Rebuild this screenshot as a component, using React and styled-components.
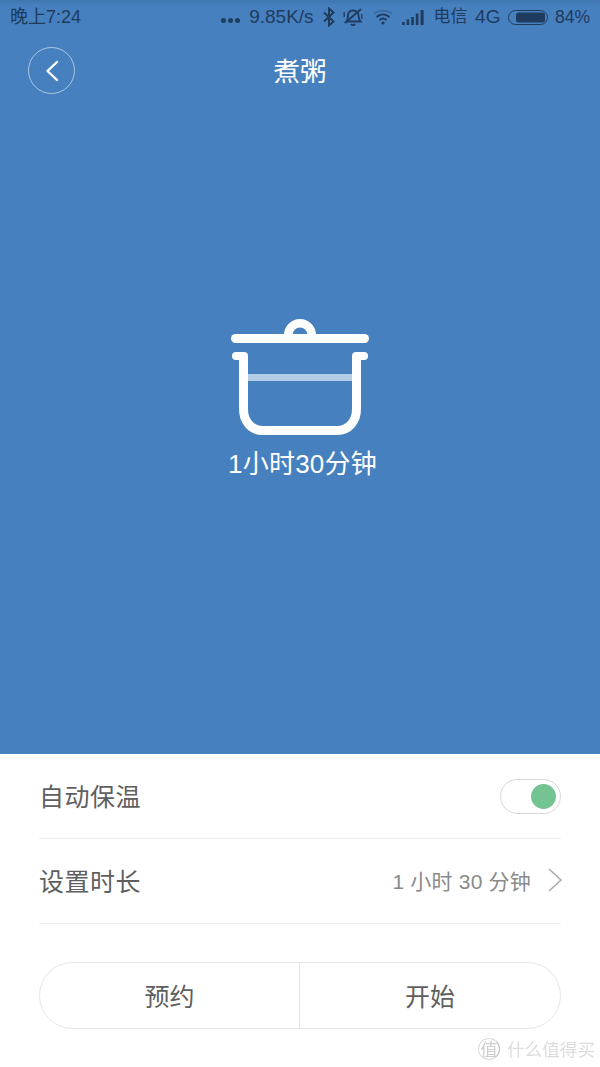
import React from "react";
import styled, { createGlobalStyle } from "styled-components";

const GlobalStyle = createGlobalStyle`
  html, body {
    margin: 0;
    padding: 0;
    background: #fff;
  }
  * {
    box-sizing: border-box;
  }
`;

const Page = styled.div`
  position: relative;
  width: 600px;
  height: 1067px;
  overflow: hidden;
  display: flex;
  flex-direction: column;
  font-family: "Liberation Sans", "Noto Sans CJK SC", sans-serif;
  background: #fff;
`;

const Hero = styled.div`
  height: 754px;
  background: linear-gradient(#3f76b2 0, #4680bf 6px);
  display: flex;
  flex-direction: column;
`;

const StatusBar = styled.div`
  height: 34px;
  padding: 0 10px;
  display: flex;
  align-items: center;
  justify-content: space-between;
  color: #1f3b5e;
  font-size: 18px;
  line-height: 20px;
`;

const StatusGroup = styled.div`
  display: flex;
  align-items: center;
  gap: 9.5px;
`;

const Dots = styled.div`
  display: flex;
  gap: 2px;
  margin-top: 6px;
`;

const Dot = styled.span`
  width: 5px;
  height: 5px;
  border-radius: 50%;
  background: #1f3b5e;
`;

const Speed = styled.span`
  font-size: 19px;
`;

const BluetoothSvg = styled.svg`
  margin-right: -1.5px;
`;

const Carrier = styled.span`
  margin-right: -2px;
  font-size: 17px;
`;

const Network = styled.span`
  margin-right: -1.5px;
  font-size: 19px;
`;

const Percent = styled.span`
  margin-left: -3px;
  font-size: 17.5px;
`;

const Header = styled.div`
  margin-top: 13px;
  padding: 0 28px;
  display: grid;
  grid-template-columns: 1fr auto 1fr;
  align-items: start;
`;

const BackButton = styled.button`
  width: 47px;
  height: 47px;
  padding: 0;
  border: 1px solid rgba(255, 255, 255, 0.55);
  border-radius: 50%;
  background: transparent;
  display: flex;
  align-items: center;
  justify-content: center;
`;

const Title = styled.div`
  margin-top: 2px;
  color: #fff;
  font-size: 26.5px;
  line-height: 47px;
`;

const Center = styled.div`
  margin-top: 221px;
  display: flex;
  flex-direction: column;
  align-items: center;
`;

const Duration = styled.div`
  margin-top: 8px;
  padding-left: 5px;
  color: #fff;
  font-size: 26px;
  line-height: 38px;
  letter-spacing: 0.2px;
`;

const Panel = styled.div`
  flex: 1;
  padding: 0 39px;
  display: flex;
  flex-direction: column;
`;

const Row = styled.div`
  height: 85px;
  padding-bottom: 2px;
  border-bottom: 1px solid #eeeeee;
  display: flex;
  align-items: center;
  justify-content: space-between;
`;

const RowLabel = styled.span`
  color: #5f5f5f;
  font-size: 25px;
  letter-spacing: 0.5px;
`;

const RowValue = styled.div`
  display: flex;
  align-items: center;
  gap: 16px;
  margin-right: -2px;
  color: #8a8a8a;
  font-size: 21px;
  letter-spacing: 0.2px;
`;

const Toggle = styled.div`
  width: 61px;
  height: 35px;
  margin-top: 2px;
  padding: 4px 4px 4px 0;
  border: 1px solid #d8d8d8;
  border-radius: 18px;
  display: flex;
  justify-content: flex-end;
  align-items: center;
`;

const Knob = styled.span`
  width: 25px;
  height: 25px;
  border-radius: 50%;
  background: #74c493;
`;

const Actions = styled.div`
  margin-top: 38px;
  height: 67px;
  border: 1px solid #e6e6e6;
  border-radius: 34px;
  display: flex;
`;

const Action = styled.div`
  flex: 1;
  padding-bottom: 2px;
  display: flex;
  align-items: center;
  justify-content: center;
  color: #5f5f5f;
  font-size: 25px;
  &:first-child {
    flex: 0 0 259px;
  }
  & + & {
    border-left: 1px solid #e6e6e6;
  }
`;

const Watermark = styled.div`
  position: absolute;
  right: 5px;
  bottom: 6px;
  display: flex;
  align-items: center;
  gap: 7px;
  color: #dcdcdc;
  font-size: 17.6px;
  filter: blur(0.4px);
`;

const Badge = styled.span`
  width: 22px;
  height: 22px;
  border: 1px solid #dcdcdc;
  border-right-color: #bbb;
  border-radius: 50%;
  display: flex;
  align-items: center;
  justify-content: center;
  font-size: 17px;
  color: #cdcdcd;
`;

const BluetoothIcon = () => (
  <BluetoothSvg width="12" height="20" viewBox="0 0 12 20" fill="none" stroke="#1f3b5e" strokeWidth="2">
    <path d="M1 5.5 L10.5 14.5 L6 18.5 V1.5 L10.5 5.5 L1 14.5" />
  </BluetoothSvg>
);

const MuteBellIcon = () => (
  <svg width="20" height="20" viewBox="0 0 20 20" fill="none" stroke="#1f3b5e" strokeWidth="1.8">
    <path d="M3.5 14.5 C5.5 12.5 4.5 9.5 5 7.5 C5.7 5 8 3.5 10 3.5 C12.5 3.5 14.8 5.2 15.4 7.5 C16 10 15.5 12.5 17.5 14.5 Z" />
    <path d="M8 17 C9 18.5 11 18.5 12 17" />
    <path d="M2 16 L18 2" strokeWidth="2" />
    <path d="M1.2 10 L1.2 5 M18.8 12 L18.8 7" strokeWidth="1.3" />
  </svg>
);

const WifiIcon = () => (
  <svg width="20" height="16" viewBox="0 0 20 16" fill="none" stroke="#1f3b5e">
    <path d="M1 5 C6 0.5 14 0.5 19 5" strokeWidth="1.6" opacity="0.3" />
    <path d="M3.5 8 C7.5 4.5 12.5 4.5 16.5 8" strokeWidth="2" />
    <path d="M6.5 11 C8.5 9.3 11.5 9.3 13.5 11" strokeWidth="2" />
    <circle cx="10" cy="14" r="1.6" fill="#1f3b5e" stroke="none" />
  </svg>
);

const SignalIcon = () => (
  <svg width="22" height="15" viewBox="0 0 22 15" fill="#1f3b5e">
    <rect x="0" y="12" width="2.6" height="3" />
    <rect x="4.6" y="9.5" width="2.6" height="5.5" />
    <rect x="9.2" y="7" width="2.6" height="8" />
    <rect x="13.8" y="3.5" width="2.6" height="11.5" />
    <rect x="18.6" y="0" width="3" height="15" />
  </svg>
);

const BatteryIcon = () => (
  <svg width="40" height="15" viewBox="0 0 40 15">
    <rect x="0.5" y="0.5" width="39" height="14" rx="7" fill="none" stroke="#1f3b5e" />
    <rect x="8" y="2.5" width="29" height="10" rx="2.5" fill="#1f3b5e" />
  </svg>
);

const BackIcon = () => (
  <svg width="16" height="24" viewBox="0 0 16 24" fill="none" stroke="#fff" strokeWidth="2.4" strokeLinecap="round" strokeLinejoin="round">
    <path d="M13 3 L3.5 12 L13 21" />
  </svg>
);

const PotIcon = () => (
  <svg width="140" height="120" viewBox="0 0 140 120">
    <path d="M54 18 A16 16 0 0 1 86 18 H77.5 A7.5 7.5 0 0 0 62.5 18 Z" fill="#fff" />
    <rect x="1" y="17" width="138" height="9" rx="4.5" fill="#fff" />
    <rect x="17" y="57" width="106" height="7" fill="#b3cde6" />
    <path
      d="M13.5 39 V92 C13.5 104 21 113.5 33 113.5 H107 C119 113.5 126.5 104 126.5 92 V39"
      fill="none"
      stroke="#fff"
      strokeWidth="9"
    />
    <rect x="2" y="35" width="16" height="8" rx="4" fill="#fff" />
    <rect x="122" y="35" width="16" height="8" rx="4" fill="#fff" />
  </svg>
);

const ChevronIcon = () => (
  <svg width="16" height="26" viewBox="0 0 16 26" fill="none" stroke="#a8a8a8" strokeWidth="1.5">
    <path d="M2 2 L14 13 L2 24" />
  </svg>
);

export default function App() {
  return (
    <Page>
      <GlobalStyle />
      <Hero>
        <StatusBar>
          <span>晚上7:24</span>
          <StatusGroup>
            <Dots>
              <Dot />
              <Dot />
              <Dot />
            </Dots>
            <Speed>9.85K/s</Speed>
            <BluetoothIcon />
            <MuteBellIcon />
            <WifiIcon />
            <SignalIcon />
            <Carrier>电信</Carrier>
            <Network>4G</Network>
            <BatteryIcon />
            <Percent>84%</Percent>
          </StatusGroup>
        </StatusBar>
        <Header>
          <BackButton aria-label="返回">
            <BackIcon />
          </BackButton>
          <Title>煮粥</Title>
        </Header>
        <Center>
          <PotIcon />
          <Duration>1小时30分钟</Duration>
        </Center>
      </Hero>
      <Panel>
        <Row>
          <RowLabel>自动保温</RowLabel>
          <Toggle>
            <Knob />
          </Toggle>
        </Row>
        <Row>
          <RowLabel>设置时长</RowLabel>
          <RowValue>
            1 小时 30 分钟
            <ChevronIcon />
          </RowValue>
        </Row>
        <Actions>
          <Action>预约</Action>
          <Action>开始</Action>
        </Actions>
      </Panel>
      <Watermark>
        <Badge>值</Badge>
        什么值得买
      </Watermark>
    </Page>
  );
}
